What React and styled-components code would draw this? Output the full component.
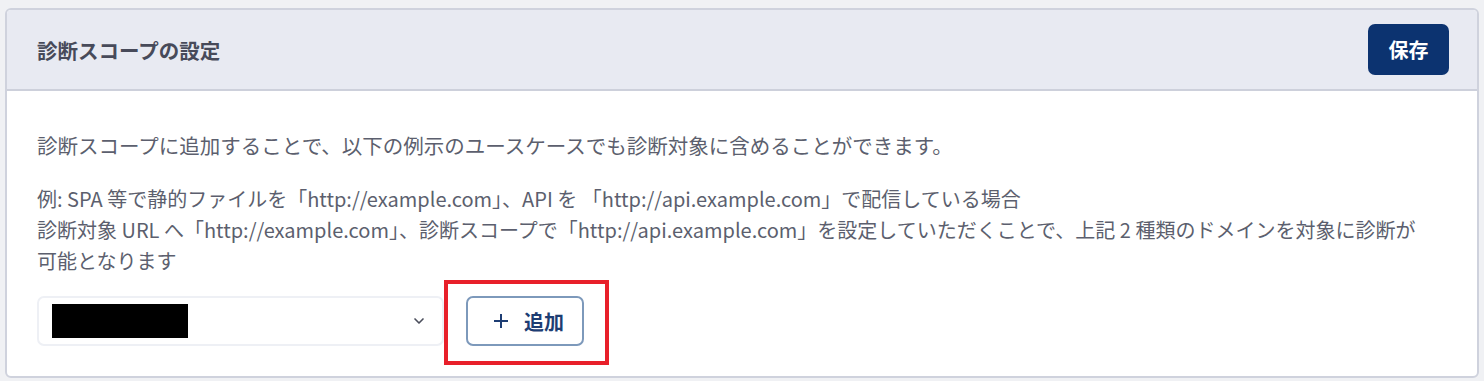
import React from "react";
import styled, { createGlobalStyle } from "styled-components";
import { ChevronDown } from "lucide-react";

const GlobalStyle = createGlobalStyle`
	body {
		margin: 0;
		background: #f0f1f4;
		font-family: "Noto Sans CJK JP", "Noto Sans", sans-serif;
	}
`;

const Page = styled.div`
	padding: 8px 5px 3px 5px;
`;

const Card = styled.section`
	background: #ffffff;
	border: 2px solid #cfd2dd;
	border-radius: 6px;
	overflow: hidden;
`;

const Header = styled.header`
	display: flex;
	align-items: center;
	justify-content: space-between;
	padding: 14px 28px 14px 30px;
	background: #e8eaf2;
	border-bottom: 2px solid #cdd0db;
`;

const Title = styled.h2`
	margin: 0;
	font-size: 20.5px;
	font-weight: 700;
	color: #474a5a;
`;

const SaveButton = styled.button`
	width: 81px;
	height: 51px;
	border: none;
	border-radius: 7px;
	background: #0c3370;
	color: #ffffff;
	font-family: inherit;
	font-size: 20px;
	font-weight: 700;
	cursor: pointer;
`;

const Body = styled.div`
	padding: 39px 45px 30px 30px;
`;

const Para = styled.p`
	margin: 0 0 ${(p) => p.$gap || 22}px 0;
	font-size: ${(p) => p.$size || 20}px;
	line-height: 31px;
	color: #5c5f6e;
`;

const Row = styled.div`
	display: flex;
	align-items: center;
	gap: 22px;
`;

const Select = styled.div`
	box-sizing: border-box;
	width: 407px;
	height: 50px;
	display: flex;
	align-items: center;
	justify-content: space-between;
	padding: 0 15px 0 13px;
	border: 2px solid #eef0f5;
	border-radius: 7px;
	background: #ffffff;
	color: #4b4e5c;
`;

// redacted value in the picture
const Redacted = styled.span`
	display: block;
	width: 136px;
	height: 34px;
	background: #000000;
`;

const Highlight = styled.div`
	position: relative;

	&::after {
		content: "";
		position: absolute;
		top: -16px;
		left: -22px;
		right: -25px;
		bottom: -19px;
		border: 4px solid #e8202a;
		pointer-events: none;
	}
`;

const AddButton = styled.button`
	box-sizing: border-box;
	width: 118px;
	height: 50px;
	display: flex;
	align-items: center;
	gap: 15px;
	padding: 0 0 0 25px;
	border: 2px solid #7d99bb;
	border-radius: 7px;
	background: #ffffff;
	color: #1d3d73;
	font-family: inherit;
	font-size: 20px;
	font-weight: 700;
	cursor: pointer;
`;

const PlusIcon = () => (
	<svg width="16" height="16" viewBox="0 0 16 16" fill="none">
		<path d="M8 1v14M1 8h14" stroke="currentColor" strokeWidth="2" />
	</svg>
);

export default function App() {
	return (
		<Page>
			<GlobalStyle />
			<Card>
				<Header>
					<Title>診断スコープの設定</Title>
					<SaveButton type="button">保存</SaveButton>
				</Header>
				<Body>
					<Para $size={20.5}>
						診断スコープに追加することで、以下の例示のユースケースでも診断対象に含めることができます。
					</Para>
					<Para $gap={20}>
						例: SPA 等で静的ファイルを「http://example.com」、API を 「http://api.example.com」で配信している場合
						<br />
						診断対象 URL へ「http://example.com」、診断スコープで「http://api.example.com」を設定していただくことで、上記 2 種類のドメインを対象に診断が可能となります
					</Para>
					<Row>
						<Select>
							<Redacted />
							<ChevronDown size={16} strokeWidth={2.5} />
						</Select>
						<Highlight>
							<AddButton type="button">
								<PlusIcon />
								追加
							</AddButton>
						</Highlight>
					</Row>
				</Body>
			</Card>
		</Page>
	);
}
